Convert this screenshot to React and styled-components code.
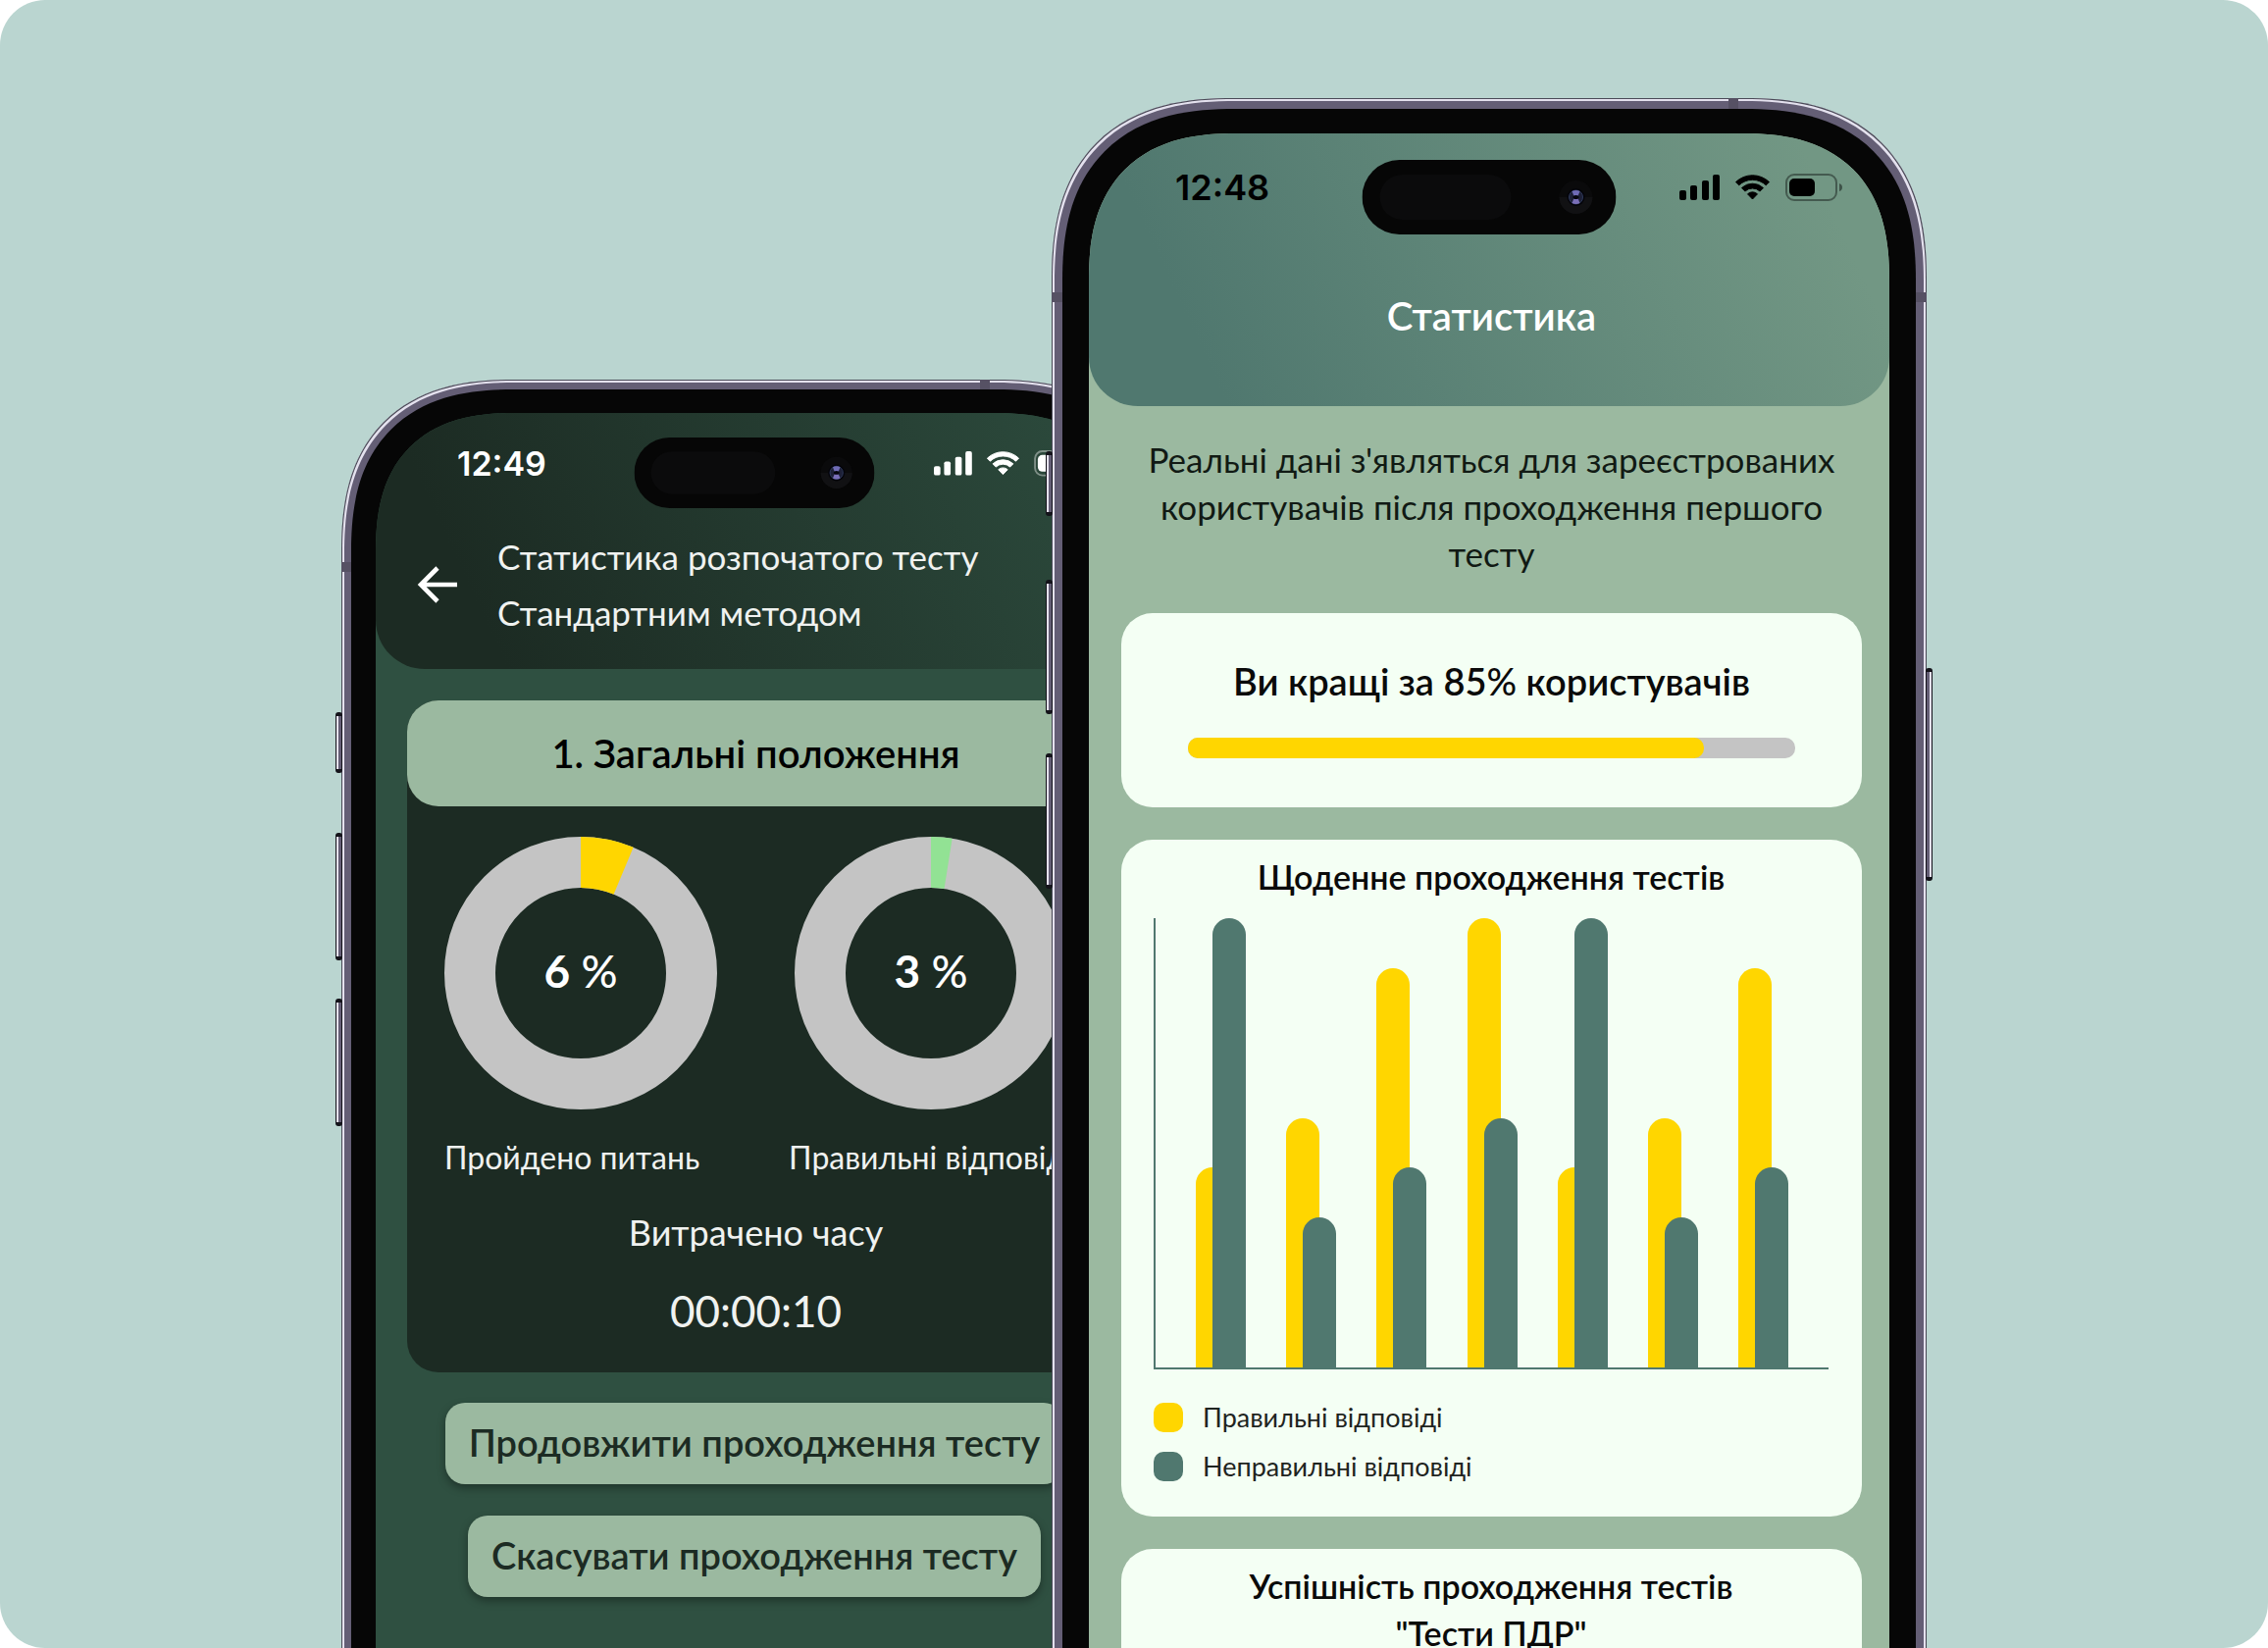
import React from "react";

import styled, { createGlobalStyle, css } from "styled-components";

const GlobalStyle = createGlobalStyle`
  *, *::before, *::after {
    box-sizing: border-box;
  }

  body {
    margin: 0;
    background: #ffffff;
    font-family: "Lato", "Open Sans", sans-serif;
  }

  h1, h2, p, ul {
    margin: 0;
    padding: 0;
  }
`;

/* Results of each day, in parts of the chart height (9 is the top of the axis) */
const CHART_MAX = 9;

const days = [
  { id: "mon", correct: 4, wrong: 9 },
  { id: "tue", correct: 5, wrong: 3 },
  { id: "wed", correct: 8, wrong: 4 },
  { id: "thu", correct: 9, wrong: 5 },
  { id: "fri", correct: 4, wrong: 9 },
  { id: "sat", correct: 5, wrong: 3 },
  { id: "sun", correct: 8, wrong: 4 },
];

export default function App() {
  return (
    <>
      <GlobalStyle />

      <Stage>
        <Phone $small>
          <TestStatistics />
        </Phone>

        <Phone>
          <OverallStatistics />
        </Phone>
      </Stage>
    </>
  );
}

/* ************************************ Phone ************************************ */

function Phone({ $small, children }) {
  return (
    <Frame $small={$small}>
      {($small ? smallKeys : largeKeys).map((key) => (
        <SideKey key={key.top} $top={key.top} $length={key.length} />
      ))}
      {!$small && <SideKey $right $top={581} $length={217} />}

      <Band $side="left" $small={$small} />
      <Band $side="top" $small={$small} />
      <Band $side="right" $small={$small} />

      <Bezel $small={$small}>
        <Screen $small={$small}>
          <Island $small={$small} />
          {children}
        </Screen>
      </Bezel>
    </Frame>
  );
}

const largeKeys = [
  { top: 360, length: 66 },
  { top: 491, length: 137 },
  { top: 668, length: 138 },
];

const smallKeys = [
  { top: 339, length: 62 },
  { top: 462, length: 130 },
  { top: 631, length: 130 },
];

function Island({ $small }) {
  return (
    <IslandSvg $small={$small} viewBox="0 0 259 76" aria-hidden="true">
      <rect width="259" height="76" rx="38" fill="#060606" />
      <rect x="18" y="15" width="134" height="46" rx="23" fill="#0b0b0c" />
      <circle cx="218" cy="38" r="17" fill="#0a0a0b" />
      <path d="M201 38a17 17 0 0 0 34 0z" fill="#111113" />
      <circle cx="218" cy="38" r="9" fill="#04040a" />
      <circle cx="218" cy="38" r="7" fill="#1d2036" stroke="#2f3a5c" strokeWidth="1" />
      <path d="M214 32q4-2 8 0l-2 5h-4z" fill="#6f6bb5" />
      <path d="M214 44q4 2 8 0l-2-5h-4z" fill="#7a6fb8" />
      <ellipse cx="218" cy="38" rx="3" ry="2" fill="#05050c" />
    </IslandSvg>
  );
}

function StatusBar({ $small, time }) {
  return (
    <Status $small={$small}>
      <Clock $small={$small}>{time}</Clock>

      <StatusIcons $small={$small} viewBox="0 0 166 26" aria-hidden="true">
        <rect x="0" y="16" width="7" height="10" rx="2" />
        <rect x="11" y="11" width="7" height="15" rx="2" />
        <rect x="23" y="6" width="7" height="20" rx="2" />
        <rect x="34" y="0" width="7" height="26" rx="2" />

        <g stroke="currentColor" strokeWidth="1" strokeLinejoin="round">
          <path d="M57.5 7.6a24.5 24.5 0 0 1 34 0l-3.2 3.2a20 20 0 0 0-27.6 0z" />
          <path d="M63.5 13.6a16 16 0 0 1 22 0l-3.4 3.4a11 11 0 0 0-15.2 0z" />
          <path d="M69.5 19.8a7.4 7.4 0 0 1 10 0l-5 5.2z" />
        </g>

        <rect
          x="109"
          y="0"
          width="51"
          height="26"
          rx="8"
          fill="none"
          stroke="currentColor"
          strokeWidth="2"
          opacity="0.4"
        />
        <rect x="112" y="4" width="26" height="18" rx="5" />
        <path d="M163 9q3 1 3 4t-3 4z" opacity="0.45" />
      </StatusIcons>
    </Status>
  );
}

/* ************************* Statistics of the started test ************************* */

function TestStatistics() {
  return (
    <DarkPage>
      <DarkHeader>
        <StatusBar $small time="12:49" />

        <TestHeading>
          <BackButton type="button" aria-label="Назад">
            <svg width="41" height="40" viewBox="0 0 41 40" aria-hidden="true">
              <path
                d="M21 3 4 20l17 17M4 20h37"
                fill="none"
                stroke="currentColor"
                strokeWidth="4.6"
              />
            </svg>
          </BackButton>

          <TestTitle>
            Статистика розпочатого тесту
            <br />
            Стандартним методом
          </TestTitle>
        </TestHeading>
      </DarkHeader>

      <Topic>
        <TopicTitle>1. Загальні положення</TopicTitle>

        <Rings>
          <Ring value={6} share={0.063} color="#ffd600" label="Пройдено питань" />
          <Ring
            value={3}
            share={0.025}
            color="#92e294"
            label="Правильні відповіді"
            $centered
          />
        </Rings>

        <TimeLabel>Витрачено часу</TimeLabel>
        <TimeValue>00:00:10</TimeValue>
      </Topic>

      <Actions>
        <ActionButton type="button">Продовжити проходження тесту</ActionButton>
        <ActionButton type="button">Скасувати проходження тесту</ActionButton>
      </Actions>
    </DarkPage>
  );
}

function Ring({ value, share, color, label, $centered }) {
  const length = 2 * Math.PI * 113;

  return (
    <RingBox $centered={$centered}>
      <RingChart>
        <svg width="278" height="278" viewBox="0 0 278 278" aria-hidden="true">
          <g fill="none" strokeWidth="52" transform="rotate(-90 139 139)">
            <circle cx="139" cy="139" r="113" stroke="#c4c4c4" />
            <circle
              cx="139"
              cy="139"
              r="113"
              stroke={color}
              strokeDasharray={`${length * share} ${length}`}
            />
          </g>
        </svg>
        <RingValue>
          {value} <Percent>%</Percent>
        </RingValue>
      </RingChart>
      <RingLabel>{label}</RingLabel>
    </RingBox>
  );
}

/* ******************************* Overall statistics ******************************* */

function OverallStatistics() {
  return (
    <LightPage>
      <LightHeader>
        <StatusBar time="12:48" />
        <PageTitle>Статистика</PageTitle>
      </LightHeader>

      <Note>
        Реальні дані з'являться для зареєстрованих
        <br />
        користувачів після проходження першого
        <br />
        тесту
      </Note>

      <Cards>
        <RankCard>
          <RankTitle>
            Ви кращі за 85<Percent>%</Percent> користувачів
          </RankTitle>
          <Track
            role="progressbar"
            aria-label="Ви кращі за 85% користувачів"
            aria-valuenow={85}
            aria-valuemin={0}
            aria-valuemax={100}
          >
            <Fill style={{ width: "85%" }} />
          </Track>
        </RankCard>

        <Card>
          <CardTitle>Щоденне проходження тестів</CardTitle>

          <Chart>
            {days.map((day) => (
              <Day key={day.id}>
                <Bar $color="#ffd600" style={{ height: `${(day.correct / CHART_MAX) * 100}%` }} />
                <Bar
                  $color="#50786f"
                  $over
                  style={{ height: `${(day.wrong / CHART_MAX) * 100}%` }}
                />
              </Day>
            ))}
          </Chart>

          <Legend>
            <LegendItem $color="#ffd600">Правильні відповіді</LegendItem>
            <LegendItem $color="#50786f">Неправильні відповіді</LegendItem>
          </Legend>
        </Card>

        <Card>
          <CardTitle>
            Успішність проходження тестів
            <br />
            "Тести ПДР"
          </CardTitle>
        </Card>
      </Cards>
    </LightPage>
  );
}

/* ************************************ Styles ************************************ */

const Stage = styled.main`
  display: flex;
  justify-content: center;
  height: 100vh;
  padding-top: 100px;
  overflow: hidden;
  border-radius: 46px;
  background: #bad5d0;
`;

/* Corners of the phone: a squircle, larger than a plain arc of the same look */
const corner = (radius) => css`
  border-radius: ${Math.round(radius * 0.84)}px ${Math.round(radius * 0.84)}px 0 0;

  @supports (corner-shape: superellipse(1.3)) {
    border-radius: ${radius}px ${radius}px 0 0;
    corner-shape: superellipse(1.3);
  }
`;

/* The bottom of the frame runs out of the stage */
const Frame = styled.div`
  position: relative;
  display: flex;
  flex: 0 1 ${({ $small }) => ($small ? 842 : 892)}px;
  min-width: 0;
  margin-top: ${({ $small }) => ($small ? 287 : 0)}px;
  margin-left: ${({ $small }) => ($small ? 0 : -118)}px;
  margin-bottom: -40px;
  padding: ${({ $small }) => ($small ? 10 : 11)}px;
  background: #645e75;
  box-shadow:
    inset 0 0 0 1px #4a4a57,
    inset 0 0 0 3px #e4e1ee;
  ${({ $small }) => corner($small ? 176 : 186)}
`;

const Bezel = styled.div`
  display: flex;
  flex: 1;
  min-width: 0;
  padding: ${({ $small }) => ($small ? "24px 25px 0" : "25px 27px 0")};
  background: #060606;
  ${({ $small }) => corner($small ? 166 : 176)}
`;

const Screen = styled.div`
  position: relative;
  flex: 1;
  min-width: 0;
  overflow: hidden;
  ${({ $small }) => corner($small ? 142 : 150)}
`;

const SideKey = styled.span`
  position: absolute;
  top: ${({ $top }) => $top}px;
  ${({ $right }) => ($right ? "right: -6px" : "left: -6px")};
  width: 7px;
  height: ${({ $length }) => $length}px;
  border: solid #14131a;
  border-width: 4px 1px;
  border-radius: 3px;
  background: linear-gradient(
    ${({ $right }) => ($right ? "270deg" : "90deg")},
    #e4e1ee 0 2px,
    #645e75 2px
  );
`;

const Band = styled.span`
  position: absolute;
  background: #565164;

  ${({ $side, $small }) =>
    $side === "top"
      ? css`
          top: 0;
          right: ${$small ? 181 : 192}px;
          width: 10px;
          height: ${$small ? 10 : 11}px;
        `
      : css`
          top: ${$small ? 186 : 198}px;
          ${$side}: 0;
          width: ${$small ? 10 : 11}px;
          height: 10px;
        `}
`;

const IslandSvg = styled.svg`
  position: absolute;
  z-index: 1;
  top: ${({ $small }) => ($small ? 25 : 27)}px;
  left: 50%;
  width: ${({ $small }) => ($small ? 245 : 259)}px;
  transform: translateX(-50%);
`;

const Status = styled.div`
  display: flex;
  align-items: center;
  justify-content: space-between;
  height: ${({ $small }) => ($small ? 102 : 110)}px;
  padding: ${({ $small }) => ($small ? "0 46px 0 83px" : "0 48px 0 88px")};
  color: ${({ $small }) => ($small ? "#ffffff" : "#000000")};
`;

const Clock = styled.time`
  font-family: "Inter", sans-serif;
  font-size: ${({ $small }) => ($small ? 34 : 36)}px;
  font-weight: 600;
`;

const StatusIcons = styled.svg`
  width: ${({ $small }) => ($small ? 157 : 166)}px;
  overflow: visible;
  fill: currentColor;
`;

const Percent = styled.span`
  font-weight: 500;
`;

const DarkPage = styled.article`
  height: 100%;
  background: #2f5041;
`;

const DarkHeader = styled.header`
  padding-bottom: 29px;
  border-radius: 0 0 50px 50px;
  background: linear-gradient(65deg, #1c2b23 15%, #2d4c3e 100%);
  color: #ffffff;
`;

const TestHeading = styled.div`
  display: flex;
  align-items: center;
  gap: 41px;
  margin-top: 16px;
  padding: 0 42px;
`;

const BackButton = styled.button`
  display: flex;
  padding: 0;
  border: 0;
  background: none;
  color: #ffffff;
`;

const TestTitle = styled.h1`
  color: #f0f2f0;
  font-size: 35px;
  font-weight: 400;
  line-height: 57px;
  white-space: nowrap;
`;

const Topic = styled.section`
  margin: 32px 29px 31px 32px;
  padding-bottom: 39px;
  border-radius: 32px;
  background: #1c2b23;
  color: #f0f2f0;
  text-align: center;
`;

const TopicTitle = styled.h2`
  border-radius: 32px;
  background: #9bb9a0;
  color: #000000;
  font-size: 40px;
  font-weight: 600;
  line-height: 108px;
`;

const Rings = styled.div`
  display: flex;
  justify-content: space-between;
  margin-bottom: 32px;
  padding: 31px 32px 0 38px;
`;

const RingBox = styled.div`
  display: flex;
  flex-direction: column;
  align-items: ${({ $centered }) => ($centered ? "center" : "flex-start")};
  gap: 29px;
`;

const RingChart = styled.div`
  display: grid;
  place-items: center;

  > * {
    grid-area: 1 / 1;
  }
`;

const RingValue = styled.strong`
  padding-bottom: 6px;
  color: #ffffff;
  font-size: 46px;
  font-weight: 700;
`;

const RingLabel = styled.p`
  font-size: 32px;
  line-height: 40px;
  white-space: nowrap;
`;

const TimeLabel = styled.p`
  margin-bottom: 32px;
  font-size: 36px;
  line-height: 48px;
`;

const TimeValue = styled.p`
  font-size: 44px;
  line-height: 48px;
`;

const Actions = styled.div`
  display: flex;
  flex-direction: column;
  align-items: center;
  gap: 32px;
`;

const ActionButton = styled.button`
  height: 83px;
  padding: 0 24px 4px;
  border: 0;
  border-radius: 20px;
  background: #9bb9a0;
  box-shadow: 0 4px 8px rgba(0, 0, 0, 0.35);
  color: #1c2b23;
  font: inherit;
  font-size: 38px;
  font-weight: 600;
  white-space: nowrap;
`;

const LightPage = styled.article`
  height: 100%;
  background: #9bb9a0;
`;

const LightHeader = styled.header`
  padding-bottom: 62px;
  border-radius: 0 0 50px 50px;
  background: linear-gradient(65deg, #50786f 15%, #729784 90%);
`;

const PageTitle = styled.h1`
  margin-top: 46px;
  padding-left: 5px;
  color: #ffffff;
  font-size: 40px;
  font-weight: 600;
  line-height: 60px;
  text-align: center;
`;

const Note = styled.p`
  padding: 30px 24px 37px 29px;
  color: #111a14;
  font-size: 35px;
  line-height: 48px;
  text-align: center;
  white-space: nowrap;
`;

const Cards = styled.div`
  display: flex;
  flex-direction: column;
  gap: 33px;
  padding: 0 28px 0 33px;
`;

const Card = styled.section`
  padding: 14px 34px 36px 33px;
  border-radius: 32px;
  background: #f4fff4;
`;

const RankCard = styled(Card)`
  padding: 45px 68px 50px;
`;

const CardTitle = styled.h2`
  color: #0a0a0a;
  font-size: 34px;
  font-weight: 600;
  line-height: 48px;
  text-align: center;
  white-space: nowrap;
`;

const RankTitle = styled(CardTitle)`
  margin-bottom: 34px;
  font-size: 38px;
`;

const Track = styled.div`
  height: 21px;
  border-radius: 10px;
  background: #c4c4c4;
`;

const Fill = styled.div`
  height: 100%;
  border-radius: 10px;
  background: #ffd600;
`;

const Chart = styled.div`
  display: flex;
  align-items: flex-end;
  justify-content: space-evenly;
  height: 460px;
  margin: 18px 0 34px;
  border-bottom: 2px solid #50786f;
  border-left: 2px solid #50786f;
`;

const Day = styled.div`
  display: flex;
  align-items: flex-end;
  height: 100%;
`;

const Bar = styled.div`
  width: 34px;
  margin-left: ${({ $over }) => ($over ? -17 : 0)}px;
  border-radius: 17px 17px 0 0;
  background: ${({ $color }) => $color};
`;

const Legend = styled.ul`
  display: flex;
  flex-direction: column;
  gap: 20px;
  list-style: none;
`;

const LegendItem = styled.li`
  display: flex;
  align-items: center;
  gap: 20px;
  color: #1f2421;
  font-size: 27px;
  line-height: 30px;

  &::before {
    content: "";
    width: 30px;
    height: 30px;
    border-radius: 10px;
    background: ${({ $color }) => $color};
  }
`;
